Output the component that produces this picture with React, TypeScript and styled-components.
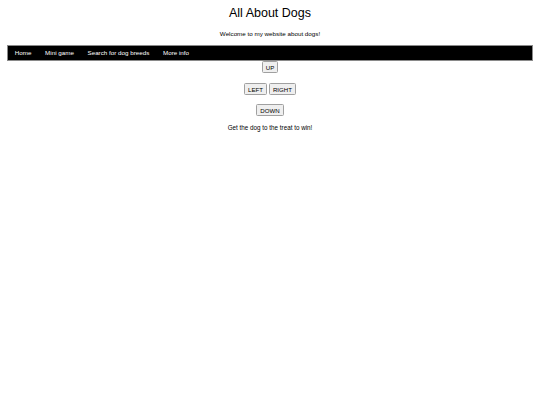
import React from "react";
import styled, { createGlobalStyle } from "styled-components";

const Global = createGlobalStyle`
  html, body { margin: 0; padding: 0; background: #ffffff; }
  body { font-family: "Liberation Sans", Arial, sans-serif; color: #000; }
`;

const Page = styled.div`
  width: 540px;
  display: flex;
  flex-direction: column;
  align-items: center;
`;

const Title = styled.h1`
  margin: 6px 0 0;
  font-size: 12.5px;
  font-weight: 400;
  line-height: 14px;
`;

const Subtitle = styled.p`
  margin: 10px 0 0;
  font-size: 6.25px;
  line-height: 8px;
`;

const Nav = styled.nav`
  align-self: stretch;
  margin: 7px 7px 0;
  height: 16px;
  background: #000;
  border: 1px solid #8a8a8a;
  box-sizing: border-box;
  display: flex;
  align-items: center;
  padding: 0;
`;

const NavLink = styled.a`
  color: #fff;
  font-size: 6.25px;
  padding: 0 6.8px;
  text-decoration: none;
  line-height: 8px;
`;

const Controls = styled.div`
  display: flex;
  flex-direction: column;
  align-items: center;
  gap: 9.5px;
`;

const Row = styled.div`
  display: flex;
  gap: 2px;
`;

const Button = styled.button`
  font-family: "Liberation Sans", Arial, sans-serif;
  font-size: 6.1px;
  line-height: 7px;
  padding: 2px 3px;
  height: 12px;
  box-sizing: border-box;
  color: #000;
  background: #efefef;
  border: 1px solid #a0a0a0;
  border-radius: 1.5px;
`;

const Hint = styled.p`
  margin: 8px 0 0;
  font-size: 6.3px;
  line-height: 8px;
`;

export default function App() {
  return (
    <Page>
      <Global />
      <Title>All About Dogs</Title>
      <Subtitle>Welcome to my website about dogs!</Subtitle>
      <Nav>
        <NavLink href="#">Home</NavLink>
        <NavLink href="#">Mini game</NavLink>
        <NavLink href="#">Search for dog breeds</NavLink>
        <NavLink href="#">More info</NavLink>
      </Nav>
      <Controls>
        <Button>UP</Button>
        <Row>
          <Button>LEFT</Button>
          <Button>RIGHT</Button>
        </Row>
        <Button>DOWN</Button>
      </Controls>
      <Hint>Get the dog to the treat to win!</Hint>
    </Page>
  );
}
